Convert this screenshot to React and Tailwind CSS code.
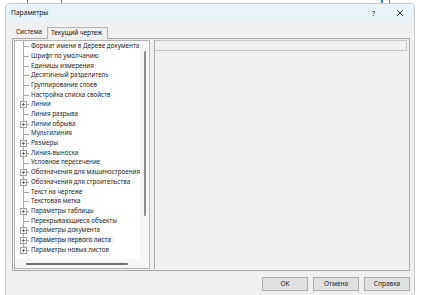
import React from "react";

const items = [
  ["Формат имени в Дереве документа", false],
  ["Шрифт по умолчанию", false],
  ["Единицы измерения", false],
  ["Десятичный разделитель", false],
  ["Группирование слоев", false],
  ["Настройка списка свойств", false],
  ["Линии", true],
  ["Линия разрыва", false],
  ["Линии обрыва", true],
  ["Мультилиния", false],
  ["Размеры", true],
  ["Линия-выноска", true],
  ["Условное пересечение", false],
  ["Обозначения для машиностроения", true],
  ["Обозначения для строительства", true],
  ["Текст на чертеже", false],
  ["Текстовая метка", false],
  ["Параметры таблицы", true],
  ["Перекрывающиеся объекты", false],
  ["Параметры документа", true],
  ["Параметры первого листа", true],
  ["Параметры новых листов", true],
];

function Glyph({ plus, last }) {
  return (
    <svg width="15" height="10" viewBox="0 0 15 10" className="shrink-0 overflow-visible">
      <line x1="8.5" y1="-1" x2="8.5" y2={last ? 5 : 11} stroke="#a8a8a8" strokeWidth="1" />
      <line x1="8.5" y1="5.5" x2="14" y2="5.5" stroke="#a8a8a8" strokeWidth="1" />
      {plus && (
        <g>
          <rect x="5.5" y="2.5" width="6" height="6" fill="#fff" stroke="#a0a0a0" strokeWidth="1" />
          <line x1="6.8" y1="5.5" x2="10.2" y2="5.5" stroke="#555" strokeWidth="0.8" />
          <line x1="8.5" y1="3.8" x2="8.5" y2="7.2" stroke="#555" strokeWidth="0.8" />
        </g>
      )}
    </svg>
  );
}

function Btn({ children }) {
  return (
    <div className="w-[46px] h-[14px] border border-[#adadad] bg-[#e1e1e1] flex items-center justify-center text-[6.5px] text-[#222]">
      {children}
    </div>
  );
}

export default function App() {
  return (
    <div className="w-[422px] h-[295px] overflow-hidden bg-white font-['Noto_Sans',sans-serif] text-[6.25px] text-[#262626] leading-none">
      <div className="h-[3px] flex">
        <div className="w-[27px]" />
        <div className="w-px bg-[#6d6d6d]" />
        <div className="w-[33px]" />
        <div className="w-px bg-[#2f7fe6]" />
        <div className="w-[319px]" />
        <div className="w-[2px] bg-[#2f7fe6]" />
        <div className="w-[6px]" />
        <div className="w-px bg-[#6d6d6d]" />
      </div>
      <div className="ml-[5px] w-[410px] h-[292px] rounded-t-[5px] border border-b-0 border-[#c9c9c9] bg-[#f0f0f0] flex flex-col overflow-hidden">
        <div className="h-[18px] bg-[#eaf4f8] flex items-center pl-[5px] text-[6.7px] text-[#111]">
          <span>Параметры</span>
          <div className="flex-1" />
          <span className="text-[7px] mr-[21px]">?</span>
          <svg width="8" height="8" viewBox="0 0 8 8" className="mr-[10px]">
            <path d="M1 1 L7 7 M7 1 L1 7" stroke="#222" strokeWidth="0.9" />
          </svg>
        </div>
        <div className="pl-[6px] pt-[4px] flex flex-col">
          <div className="h-[12px] flex items-end">
            <div className="w-[35px] h-[11px] flex items-center pl-[4px] text-[6.4px] text-[#222]">Система</div>
            <div className="w-[61px] h-[12px] border border-b-0 border-[#b4b4b4] bg-[#f0f0f0] flex items-center pl-[3px] text-[6.4px] text-[#111] -mb-px relative">
              Текущий чертеж
            </div>
          </div>
          <div className="w-[398px] h-[233px] border border-[#a9a9a9] bg-[#f0f0f0] flex p-px">
            <div className="w-[136px] h-[229px] border border-[#b5b5b5] bg-white flex flex-col">
              <div className="flex flex-1">
                <div className="w-[125px] bg-white pt-[0.5px] flex flex-col overflow-hidden">
                  {items.map(([t, plus], i) => (
                    <div key={i} className="h-[9.7px] flex items-center">
                      <Glyph plus={plus} last={i === items.length - 1} />
                      <span
                        className={
                          "whitespace-nowrap pl-[1px] pr-[2px] " +
                          (i === 20 ? "bg-[#eaf2fa]" : "")
                        }
                      >
                        {t}
                      </span>
                    </div>
                  ))}
                </div>
                <div className="w-[9px] bg-[#f6f6f6] pt-[10px] pl-[4px]">
                  <div className="w-[2px] h-[165px] bg-[#8a8a8a] rounded-full" />
                </div>
              </div>
              <div className="h-[9px] bg-[#f6f6f6] pt-[4px] pl-[11px]">
                <div className="w-[102px] h-[1.5px] bg-[#6f6f6f] rounded-full" />
              </div>
            </div>
            <div className="w-[4px]" />
            <div className="w-[253px] h-[229px] border-l border-[#a9a9a9] flex flex-col">
              <div className="h-[11px] border-t border-b border-r border-[#c7c7c7] bg-[#f0f0f0]" />
            </div>
          </div>
          <div className="w-[398px] flex justify-end gap-[5px] mt-[6px]">
            <Btn>OK</Btn>
            <Btn>Отмена</Btn>
            <Btn>Справка</Btn>
          </div>
        </div>
      </div>
    </div>
  );
}
